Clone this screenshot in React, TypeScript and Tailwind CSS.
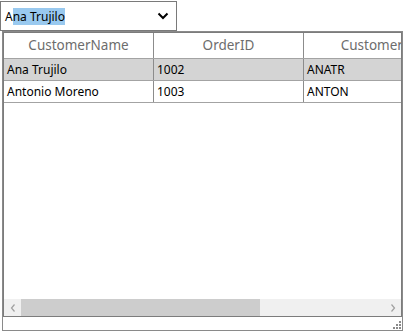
import React from "react";

const font = { fontFamily: '"Segoe UI", "Noto Sans", "Open Sans", sans-serif' };

function Row({ a, b, c, selected }: { a: string; b: string; c: string; selected?: boolean }) {
  return (
    <div className={`flex h-[22px] border-b border-[#a3a3a3] text-[12px] text-black ${selected ? "bg-[#d4d4d4]" : "bg-white"}`}>
      <div className="w-[150px] shrink-0 border-r border-[#8c8c8c] pl-[3px] flex items-center">{a}</div>
      <div className="w-[150px] shrink-0 border-r border-[#8c8c8c] pl-[3px] flex items-center">{b}</div>
      <div className="w-[150px] shrink-0 pl-[3px] flex items-center">{c}</div>
    </div>
  );
}

export default function App() {
  return (
    <div className="w-[405px] h-[332px] bg-white overflow-hidden" style={font}>
      <div className="mt-[1px] w-[177px] h-[30px] border border-[#7a7a7a] flex items-center justify-between">
        <span className="pl-[4px] text-[12px] text-black leading-[13px]">
          A<span className="bg-[#99c9ef]">na Trujilo</span>
        </span>
        <svg width="12" height="8" viewBox="0 0 12 8" className="mr-[7px]">
          <polyline points="1.5,1.5 6,6 10.5,1.5" fill="none" stroke="#000" strokeWidth="2" />
        </svg>
      </div>
      <div className="ml-[2px] w-[401px] h-[300px] border border-[#8a8a8a] flex flex-col">
        <div className="h-[285px] border border-[#7c7c7c] flex flex-col overflow-hidden">
          <div className="flex-1 overflow-hidden">
            <div className="flex h-[26px] border-b border-[#a3a3a3] text-[13.5px] text-[#6d6d6d]">
              <div className="w-[150px] shrink-0 border-r border-[#8c8c8c] flex items-center justify-center">CustomerName</div>
              <div className="w-[150px] shrink-0 border-r border-[#8c8c8c] flex items-center justify-center">OrderID</div>
              <div className="w-[150px] shrink-0 flex items-center justify-center">CustomerID</div>
            </div>
            <Row a="Ana Trujilo" b="1002" c="ANATR" selected />
            <Row a="Antonio Moreno" b="1003" c="ANTON" />
          </div>
          <div className="h-[17px] flex bg-[#f0f0f0]">
            <div className="w-[17px] flex items-center justify-center">
              <svg width="6" height="8" viewBox="0 0 6 8">
                <polyline points="4.5,0.5 1.5,4 4.5,7.5" fill="none" stroke="#a0a0a0" strokeWidth="1.2" />
              </svg>
            </div>
            <div className="w-[239px] bg-[#cdcdcd]" />
            <div className="flex-1" />
            <div className="w-[17px] flex items-center justify-center">
              <svg width="6" height="8" viewBox="0 0 6 8">
                <polyline points="1.5,0.5 4.5,4 1.5,7.5" fill="none" stroke="#a0a0a0" strokeWidth="1.2" />
              </svg>
            </div>
          </div>
        </div>
        <div className="flex-1 flex justify-end items-end">
          <svg width="10" height="10" viewBox="0 0 10 10">
            <rect x="7" y="1" width="2" height="2" fill="#8a8a8a" />
            <rect x="4" y="4" width="2" height="2" fill="#8a8a8a" />
            <rect x="7" y="4" width="2" height="2" fill="#8a8a8a" />
            <rect x="1" y="7" width="2" height="2" fill="#8a8a8a" />
            <rect x="4" y="7" width="2" height="2" fill="#8a8a8a" />
            <rect x="7" y="7" width="2" height="2" fill="#8a8a8a" />
          </svg>
        </div>
      </div>
    </div>
  );
}
